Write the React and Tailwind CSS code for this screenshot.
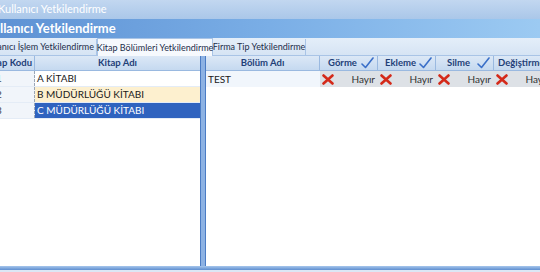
import { useState } from 'react'

const books = [
  { code: '1', name: 'A KİTABI' },
  { code: '2', name: 'B MÜDÜRLÜĞÜ KİTABI' },
  { code: '3', name: 'C MÜDÜRLÜĞÜ KİTABI' },
]

const perms = ['Görme', 'Ekleme', 'Silme', 'Değiştirme']

function Check() {
  return (
    <svg className="shrink-0" width="13" height="12" viewBox="0 0 13 12">
      <path d="M1 7 L4.5 10.5 L12 1" fill="none" stroke="#3a6fc8" strokeWidth="1.6" strokeLinecap="round" strokeLinejoin="round" />
    </svg>
  )
}

function Cross() {
  return (
    <svg className="shrink-0" width="12" height="11" viewBox="0 0 12 11">
      <path d="M1.5 1.5 L10.5 9.5 M10.5 1.5 L1.5 9.5" stroke="#d42a1a" strokeWidth="2.6" strokeLinecap="round" />
    </svg>
  )
}

function App() {
  const [selected, setSelected] = useState(2)

  return (
    <div className="flex h-[272px] w-[540px] flex-col overflow-hidden bg-white text-[10px] text-[#1a1a1a]" style={{ fontFamily: "Lato, 'Liberation Sans', sans-serif" }}>
      <div className="flex h-[19px] shrink-0 items-center overflow-hidden whitespace-nowrap bg-gradient-to-b from-[#c2d7f0] to-[#aac7e9] text-[11px] text-white">
        <span className="-ml-[2px]">Kullanıcı Yetkilendirme</span>
      </div>

      <div className="flex h-[19px] shrink-0 items-center overflow-hidden whitespace-nowrap bg-gradient-to-r from-[#5e92d4] via-[#7aaee6] to-[#9ccaf2] text-[13px] font-bold text-white">
        <span className="-ml-[16px]">Kullanıcı Yetkilendirme</span>
      </div>

      <div className="flex h-[18px] shrink-0 items-end border-b border-[#a9c4e6] bg-gradient-to-b from-[#e4eef9] to-[#d6e4f4] text-[9px] text-[#1d2d4a]">
        <div className="flex h-[16px] w-[97px] items-center justify-end overflow-hidden whitespace-nowrap border-r border-[#a9c4e6] pr-[2px]">
          <span>Kullanıcı İşlem Yetkilendirme</span>
        </div>
        <div className="-mb-px flex h-[18px] w-[116px] items-center justify-center whitespace-nowrap border-x border-t border-[#a9c4e6] bg-[#f6f9fd]">
          Kitap Bölümleri Yetkilendirme
        </div>
        <div className="flex h-[16px] w-[93px] items-center justify-center whitespace-nowrap border-r border-[#a9c4e6]">
          Firma Tip Yetkilendirme
        </div>
      </div>

      <div className="flex min-h-0 flex-1">
        <div className="flex w-[200px] shrink-0 flex-col">
          <div className="flex h-[15px] border-b border-[#9ab9e0] bg-gradient-to-b from-[#dce8f6] to-[#c5d9f0] text-[9.5px] font-bold text-[#1f3f78]">
            <div className="flex w-[35px] items-center justify-end overflow-hidden whitespace-nowrap border-r border-[#9ab9e0] pr-[2px]">
              <span>Kitap Kodu</span>
            </div>
            <div className="flex flex-1 items-center justify-center">Kitap Adı</div>
          </div>
          {books.map((b, i) => (
            <div key={b.code} onClick={() => setSelected(i)} className="flex h-[16px] border-b border-[#e4ecf6] text-[10px]">
              <div className="flex w-[35px] items-center overflow-hidden border-r border-dashed border-[#9aa6b6] bg-[#f1f5fa] text-[#445]">
                <span className="-ml-[4px]">{b.code}</span>
              </div>
              <div className={`flex flex-1 items-center pl-[2px] ${selected === i ? 'bg-[#2f63bf] text-white' : i === 1 ? 'bg-[#fdf0cf] text-[#1a1a1a]' : 'bg-white text-[#1a1a1a]'}`}>
                {b.name}
              </div>
            </div>
          ))}
          <div className="flex-1" />
        </div>

        <div className="w-[6px] shrink-0 border-x border-[#4b7cc4] bg-[#8db2e3]" />

        <div className="flex min-w-0 flex-1 flex-col">
          <div className="flex h-[15px] border-b border-[#9ab9e0] bg-gradient-to-b from-[#dce8f6] to-[#c5d9f0] text-[9.5px] font-bold text-[#1f3f78]">
            <div className="flex w-[114px] shrink-0 items-center justify-center border-r border-[#9ab9e0]">Bölüm Adı</div>
            {perms.map((p) => (
              <div key={p} className="flex w-[58px] shrink-0 items-center border-r border-[#9ab9e0] pl-[4px] pr-[3px]">
                <span className="flex-1 whitespace-nowrap text-center">{p}</span>
                <Check />
              </div>
            ))}
          </div>
          <div className="flex h-[16px] bg-[#f1f6fc] text-[10px]">
            <div className="flex w-[114px] shrink-0 items-center pl-[2px]">TEST</div>
            {perms.map((p) => (
              <div key={p} className="flex w-[58px] shrink-0 items-center justify-between bg-[#dde1e6] pl-[2px] pr-[3px] text-[#333]">
                <Cross />
                <span>Hayır</span>
              </div>
            ))}
          </div>
          <div className="flex-1" />
        </div>
      </div>

      <div className="h-[4px] shrink-0 bg-gradient-to-b from-[#a6c6ec] to-[#5f8fd0]" />
      <div className="h-[2px] shrink-0 bg-[#dbe7f5]" />
    </div>
  )
}

export default App
